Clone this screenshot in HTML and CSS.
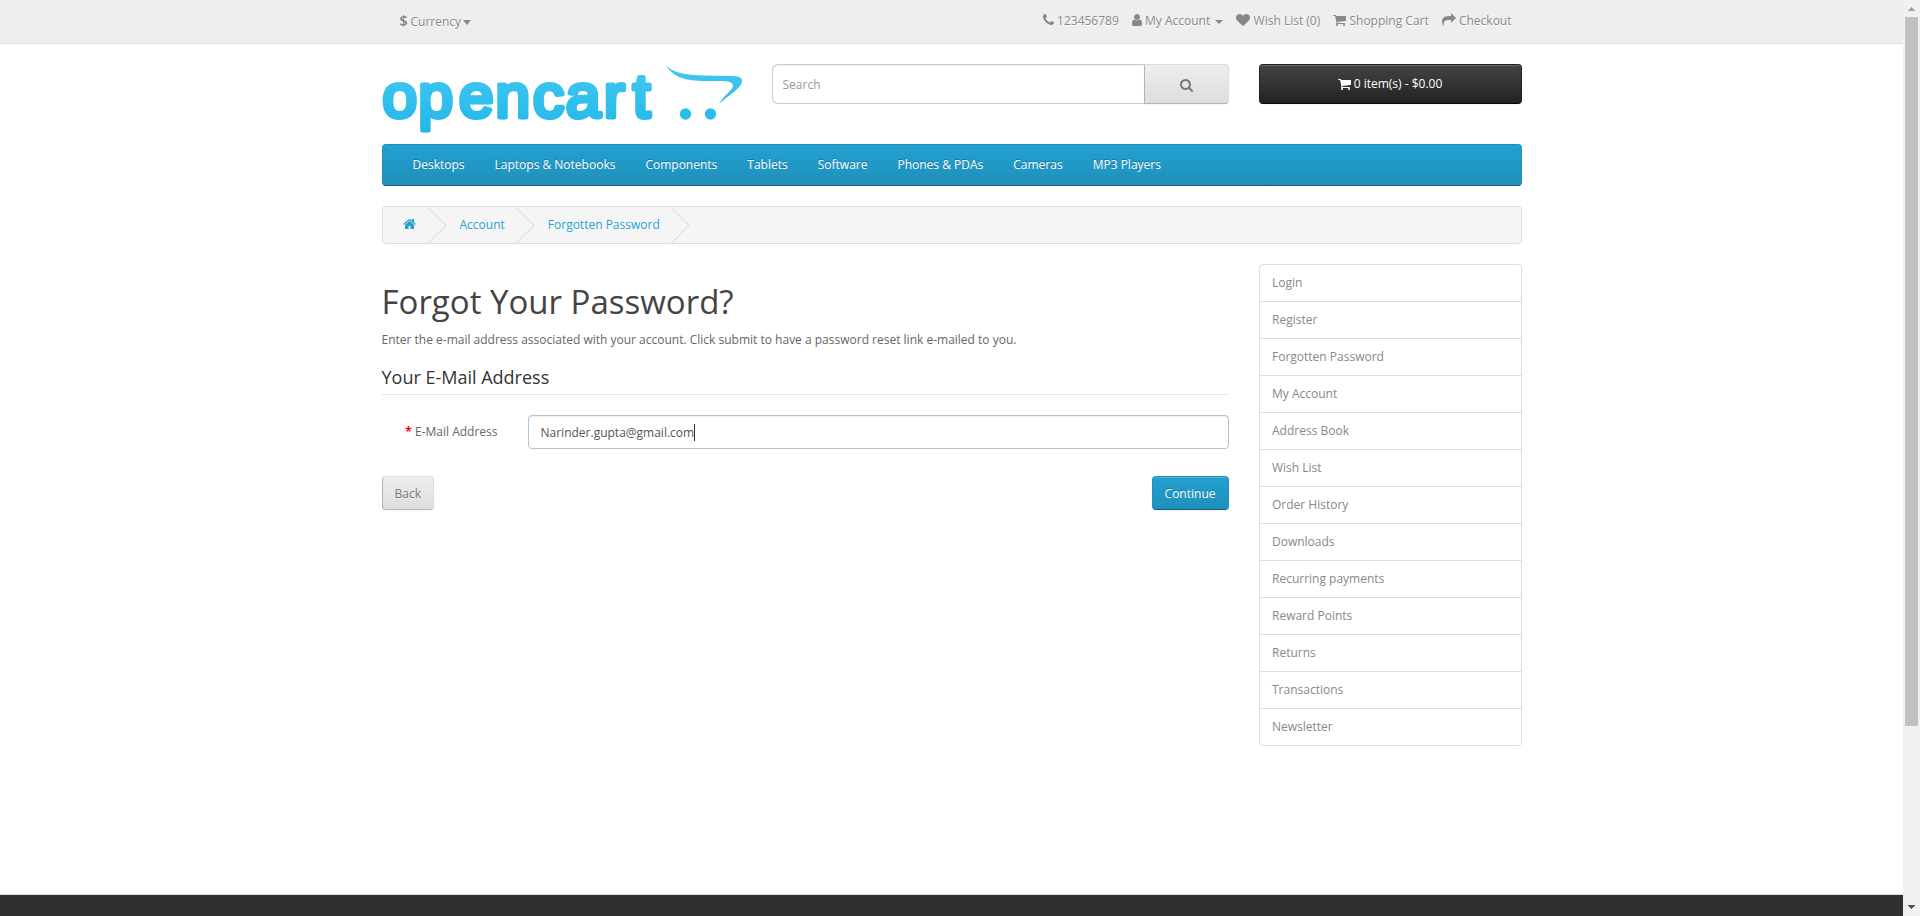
FILE: index.html
```html
<!DOCTYPE html>
<html lang="en">
<head>
<meta charset="utf-8">
<title>Forgot Your Password?</title>
<link rel="stylesheet" href="styles.css">
</head>
<body>
<svg class="defs" aria-hidden="true">
  <symbol id="i-phone" viewBox="192 0 1408 1792"><path d="M1600 1240q0 27-10 70.5t-21 68.5q-21 50-122 106-94 51-186 51-27 0-53-3.5t-57.5-12.5-47-14.5-55.5-20.5-49-18q-98-35-175-83-127-79-264-216t-216-264q-48-77-83-175-3-9-18-49t-20.5-55.5-14.5-47-12.5-57.5-3.5-53q0-92 51-186 56-101 106-122 25-11 68.5-21t70.5-10q14 0 21 3 18 6 53 76 11 19 30 54t35 63.5 31 53.5q3 4 17.5 25t21.5 35.5 7 28.5q0 20-28.5 50t-62 55-62 53-28.5 46q0 9 5 22.5t8.5 20.5 14 24 11.500 19q76 137 174 235t235 174q2 1 19 11.500t24 14 20.500 8.500 22.500 5q18 0 46-28.500t53-62 55-62 50-28.500q14 0 28.500 7t35.500 21.500 25 17.500q25 15 53.500 31t63.500 35 54 30q70 35 76 53 3 7 3 21z"/></symbol>
  <symbol id="i-user" viewBox="256 0 1280 1792"><path d="M1536 1399q0 109-62.500 187t-150.500 78h-854q-88 0-150.500-78t-62.500-187q0-85 8.500-160.500t31.500-152 58.500-131 94-89 134.500-34.500q131 128 313 128t313-128q76 0 134.500 34.500t94 89 58.500 131 31.500 152 8.500 160.500zm-256-887q0 159-112.500 271.500t-271.500 112.500-271.500-112.500-112.500-271.500 112.500-271.500 271.500-112.500 271.500 112.500 112.500 271.500z"/></symbol>
  <symbol id="i-heart" viewBox="0 0 1792 1792"><path d="M896 1664q-26 0-44-18l-624-602q-10-8-27.500-26t-55.500-65.500-68-97.500-53.500-121-23.500-138q0-220 127-344t351-124q62 0 126.500 21.500t120 58 95.500 68.500 76 68q36-36 76-68t95.500-68.500 120-58 126.500-21.500q224 0 351 124t127 344q0 221-229 450l-623 600q-18 18-44 18z"/></symbol>
  <symbol id="i-cart" viewBox="64 0 1664 1792"><path d="M704 1536q0 52-38 90t-90 38-90-38-38-90 38-90 90-38 90 38 38 90zm896 0q0 52-38 90t-90 38-90-38-38-90 38-90 90-38 90 38 38 90zm128-1088v512q0 24-16.500 42.500t-40.500 21.500l-1044 122q13 60 13 70 0 16-24 64h920q26 0 45 19t19 45-19 45-45 19h-1024q-26 0-45-19t-19-45q0-11 8-31.500t16-36 21.500-40 15.500-29.500l-177-823h-204q-26 0-45-19t-19-45 19-45 45-19h256q16 0 28.500 6.500t19.500 15.500 13 24.500 8 26 5.500 29.500 4.500 26h1201q26 0 45 19t19 45z"/></symbol>
  <symbol id="i-share" viewBox="0 0 1792 1792"><path d="M1792 640q0 26-19 45l-512 512q-19 19-45 19t-45-19-19-45v-256h-224q-98 0-175.500 6t-154 21.500-133 42.500-105.500 69.500-80 101-48.500 138.500-17.500 181q0 55 5 123 0 6 2.500 23.500t2.500 26.500q0 15-8.500 25t-23.500 10q-16 0-28-17-7-9-13-22t-13.500-30-10.500-24q-127-285-127-451 0-199 53-333 162-403 875-403h224v-256q0-26 19-45t45-19 45 19l512 512q19 19 19 45z"/></symbol>
  <symbol id="i-search" viewBox="64 0 1664 1792"><path d="M1216 832q0-185-131.500-316.500t-316.500-131.500-316.500 131.500-131.500 316.500 131.500 316.500 316.500 131.500 316.500-131.500 131.500-316.500zm512 832q0 52-38 90t-90 38q-54 0-90-38l-343-342q-179 124-399 124-143 0-273.500-55.500t-225-150-150-225-55.500-273.500 55.500-273.500 150-225 225-150 273.500-55.500 273.500 55.500 225 150 150 225 55.500 273.500q0 220-124 399l343 343q37 37 37 90z"/></symbol>
  <symbol id="i-home" viewBox="64 0 1664 1792"><path d="M1472 992v480q0 26-19 45t-45 19h-384v-384h-256v384h-384q-26 0-45-19t-19-45v-480q0-1 .5-3t.5-3l575-474 575 474q1 2 1 6zm223-69l-62 74q-8 9-21 11h-3q-13 0-21-7l-692-577-692 577q-12 8-24 7-13-2-21-11l-62-74q-8-10-7-23.500t11-21.500l719-599q32-26 76-26t76 26l244 204v-195q0-14 9-23t23-9h192q14 0 23 9t9 23v408l219 182q10 8 11 21.500t-7 23.500z"/></symbol>
</svg>
<div class="page">
  <nav class="top">
    <div class="container top-inner">
      <button class="currency"><strong>$</strong><span>Currency</span><i class="caret"></i></button>
      <ul class="top-links">
        <li><svg class="icon w11"><use href="#i-phone"/></svg><span>123456789</span></li>
        <li><svg class="icon w10"><use href="#i-user"/></svg><span>My Account</span><i class="caret caret-gap"></i></li>
        <li><svg class="icon w14"><use href="#i-heart"/></svg><span>Wish List (0)</span></li>
        <li><svg class="icon w13"><use href="#i-cart"/></svg><span>Shopping Cart</span></li>
        <li><svg class="icon w14"><use href="#i-share"/></svg><span>Checkout</span></li>
      </ul>
    </div>
  </nav>
  <header class="container header">
    <a class="logo">
      <svg width="361" height="80" viewBox="0 0 361 80">
        <defs><linearGradient id="brand" gradientUnits="userSpaceOnUse" x1="0" y1="0" x2="0" y2="72"><stop offset="0" stop-color="#43c9f0"/><stop offset="1" stop-color="#20b6ea"/></linearGradient></defs>
        <text class="wordmark" x="0.500 36.500 77 113.500 151 184 222 251" y="53">opencart</text>
        <path fill="url(#brand)" d="M283 0.500C291 9 303 11 322 11.500L346 12C357 12 361 13 360 18C359 24 347 31 337 40C341 32 350 27 351 22C351 18 346 17 338 17L320 17C300 16.500 291 12 283 0.500Z"/>
        <circle fill="url(#brand)" cx="303.500" cy="50" r="5.700"/><circle fill="url(#brand)" cx="328.500" cy="50" r="5.700"/>
      </svg>
    </a>
    <div class="search">
      <div class="search-input">Search</div>
      <button class="search-btn"><svg class="icon w13"><use href="#i-search"/></svg></button>
    </div>
    <button class="cart"><svg class="icon w13"><use href="#i-cart"/></svg><span>0 item(s) - $0.00</span></button>
  </header>
  <div class="container">
    <nav class="menu">
      <a>Desktops</a><a>Laptops &amp; Notebooks</a><a>Components</a><a>Tablets</a><a>Software</a><a>Phones &amp; PDAs</a><a>Cameras</a><a>MP3 Players</a>
    </nav>
    <ul class="breadcrumb">
      <li><svg class="icon w13"><use href="#i-home"/></svg></li>
      <li>Account</li>
      <li>Forgotten Password</li>
    </ul>
    <div class="columns">
      <main class="content">
        <h1>Forgot Your Password?</h1>
        <p>Enter the e-mail address associated with your account. Click submit to have a password reset link e-mailed to you.</p>
        <h2 class="legend">Your E-Mail Address</h2>
        <div class="form-group">
          <label><b class="req">*</b> E-Mail Address</label>
          <div class="field"><span>Narinder.gupta@gmail.com</span><i class="cursor"></i></div>
        </div>
        <div class="buttons"><a class="btn">Back</a><a class="btn btn-primary">Continue</a></div>
      </main>
      <aside class="list-group">
        <a>Login</a><a>Register</a><a>Forgotten Password</a><a>My Account</a><a>Address Book</a><a>Wish List</a><a>Order History</a><a>Downloads</a><a>Recurring payments</a><a>Reward Points</a><a>Returns</a><a>Transactions</a><a>Newsletter</a>
      </aside>
    </div>
  </div>
  <footer class="footer"></footer>
</div>
<div class="scrollbar">
  <svg class="arrow" width="17" height="17" shape-rendering="crispEdges"><path fill="#a3a3a3" d="M8 7h1v1h1v1h1v1h1v1H5v-1h1V9h1V8h1z"/></svg>
  <div class="thumb"></div>
  <svg class="arrow" width="17" height="17" shape-rendering="crispEdges"><path fill="#505050" d="M5 6h7v1h-1v1h-1v1H9v1H8V9H7V8H6V7H5z"/></svg>
</div>
</body>
</html>
```
FILE: styles.css
```css
* { box-sizing: border-box; }
body {
  margin: 0;
  display: flex;
  height: 916px;
  overflow: hidden;
  background: #fff;
  color: #666;
  font: 400 12px/20px "Open Sans", sans-serif;
}
ul { list-style: none; margin: 0; padding: 0; }
button { font: inherit; margin: 0; }
.defs { position: absolute; width: 0; height: 0; }
.page { flex: 1; display: flex; flex-direction: column; }
.container { width: 1140px; margin: 0 auto; }
.icon { height: 14px; fill: currentColor; flex: none; }
.w10 { width: 10px; }
.w11 { width: 11px; }
.w13 { width: 13px; }
.w14 { width: 14px; }
.caret {
  border-top: 4px solid;
  border-left: 4px solid transparent;
  border-right: 4px solid transparent;
}

/* Top bar */
.top {
  height: 44px;
  background: #eee;
  border-bottom: 1px solid #e2e2e2;
  color: #888;
  text-shadow: 0 1px 0 #fff;
}
.top-inner { display: flex; justify-content: space-between; }
.currency {
  display: flex;
  align-items: center;
  gap: 3px;
  height: 20px;
  margin: 12px 0 0 18px;
  padding: 0;
  border: 0;
  background: none;
  color: #888;
  text-shadow: inherit;
}
.currency strong { font-size: 14px; line-height: 18px; margin-top: -2px; }
.currency .caret { border-width: 5px 4.5px 0; margin-left: -1px; }
.top-links { display: flex; gap: 13px; padding: 9px 10px 0 0; }
.top-links li { display: flex; align-items: center; gap: 3.2px; }
.top-links .icon { margin-top: -1px; }
.caret-gap { margin: 3px 0 0 2px; }

/* Header */
.header { display: flex; height: 80px; margin-top: 20px; }
.logo { width: 390px; flex: none; }
.logo svg { display: block; }
.wordmark {
  font: 400 62px "Liberation Sans", sans-serif;
  fill: url(#brand);
  stroke: url(#brand);
  stroke-width: 5px;
  stroke-linejoin: round;
}
.search { display: flex; width: 457px; height: 40px; margin-right: 30px; }
.search-input {
  flex: 1;
  padding: 10px;
  border: 1px solid #ccc;
  border-right: 0;
  border-radius: 6px 0 0 6px;
  box-shadow: inset 0 1px 1px rgba(0, 0, 0, .075);
  color: #999;
  line-height: 20px;
}
.search-btn {
  display: flex;
  align-items: center;
  justify-content: center;
  width: 85px;
  padding: 2px 0 0;
  border: 1px solid;
  border-color: #ddd #ddd #b3b3b3 #b3b3b3;
  border-radius: 0 4px 4px 0;
  background: linear-gradient(#eee, #ddd);
  box-shadow: 0 1px 2px rgba(0, 0, 0, .05);
  color: #777;
}
.cart {
  display: flex;
  align-items: center;
  justify-content: center;
  gap: 3px;
  width: 263px;
  height: 40px;
  padding: 0 0 1px;
  border: 1px solid;
  border-color: #222 #222 #040404;
  border-radius: 4px;
  background: linear-gradient(#444, #222);
  box-shadow: inset 0 1px 0 rgba(255, 255, 255, .2), 0 1px 2px rgba(0, 0, 0, .05);
  color: #fff;
}

/* Menu and breadcrumb */
.menu {
  display: flex;
  height: 42px;
  padding: 0 15px;
  border: 1px solid;
  border-color: #1f90bb #1f90bb #145e7a;
  border-radius: 4px;
  background: linear-gradient(#23a1d1, #1f90bb);
  color: #fff;
  text-shadow: 0 -1px 0 rgba(0, 0, 0, .25);
}
.menu a { padding: 10px 15px; white-space: nowrap; }
.breadcrumb {
  display: flex;
  height: 38px;
  margin: 20px 0;
  border: 1px solid #ddd;
  border-radius: 4px;
  background: #f5f5f5;
  color: #23a1d1;
  overflow: hidden;
}
.breadcrumb li {
  display: flex;
  align-items: center;
  position: relative;
  padding: 0 20px;
  margin-right: 5px;
  white-space: nowrap;
  text-shadow: 0 1px 0 #fff;
}
.breadcrumb li + li { padding: 0 19px; }
.breadcrumb .icon { margin-top: -2px; }
.breadcrumb li::after {
  content: "";
  position: absolute;
  top: 5px;
  right: -5px;
  width: 26px;
  height: 26px;
  border: 1px solid #ddd;
  border-bottom: 0;
  border-left: 0;
  transform: rotate(45deg);
}

/* Body */
.columns { display: flex; justify-content: space-between; align-items: flex-start; }
.content { width: 847px; }
h1 { margin: 20px 0 10px; font-size: 33px; line-height: 36px; font-weight: 400; color: #444; }
p { margin: 0 0 10px; }
.legend {
  margin: 0 0 20px;
  padding: 7px 0;
  border-bottom: 1px solid #e5e5e5;
  font-size: 18px;
  line-height: 20px;
  font-weight: 400;
  color: #333;
}
.form-group { display: flex; gap: 30px; margin-bottom: 27px; }
label { width: 116px; padding-top: 7px; text-align: right; }
.req { color: #f00; }
.field {
  display: flex;
  align-items: center;
  flex: 1;
  height: 34px;
  padding: 0 12px;
  border: 1px solid #b0c4d9;
  border-radius: 4px;
  box-shadow: inset 0 1px 1px rgba(0, 0, 0, .075);
  color: #555;
}
.field span { padding-top: 2px; }
.cursor { width: 1px; height: 17px; background: #333; }
.buttons { display: flex; justify-content: space-between; }
.btn {
  height: 34px;
  padding: 7px 12px;
  border: 1px solid;
  border-color: #ddd #ddd #b3b3b3 #b3b3b3;
  border-radius: 4px;
  background: linear-gradient(#eee, #ddd);
  box-shadow: inset 0 1px 0 rgba(255, 255, 255, .2), 0 1px 2px rgba(0, 0, 0, .05);
  color: #777;
  text-shadow: 0 1px 0 rgba(255, 255, 255, .5);
}
.btn-primary {
  border-color: #1f90bb #1f90bb #145e7a;
  background: linear-gradient(#23a1d1, #1f90bb);
  color: #fff;
  text-shadow: 0 -1px 0 rgba(0, 0, 0, .25);
}
.list-group {
  width: 263px;
  border: 1px solid #ddd;
  border-radius: 4px;
  color: #888;
}
.list-group a { display: block; height: 37px; padding: 8px 12.5px; border-top: 1px solid #ddd; }
.list-group a:first-child { height: 36px; border-top: 0; }
.footer { height: 22px; margin-top: auto; border-top: 1px solid #ddd; background: #303030; }

/* Scrollbar */
.scrollbar { display: flex; flex-direction: column; width: 17px; background: #f1f1f1; }
.thumb { width: 13px; height: 709px; margin: 0 2px auto; background: #c1c1c1; }
```
